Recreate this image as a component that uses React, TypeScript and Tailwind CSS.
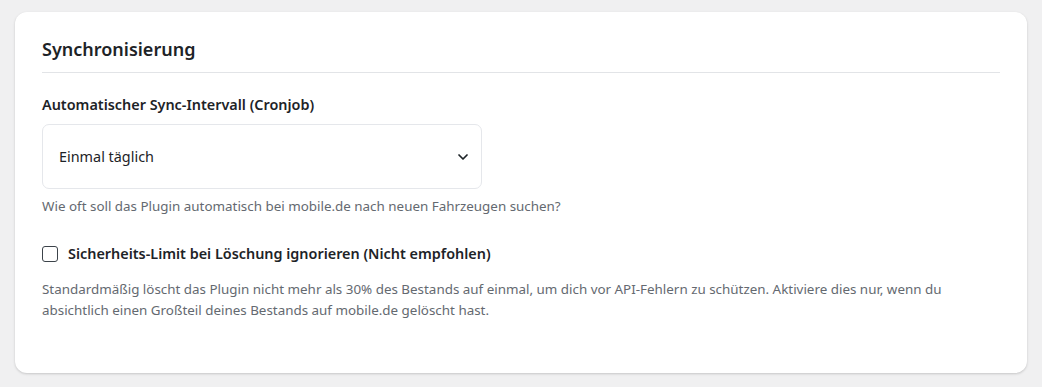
import { ChevronDown } from 'lucide-react';

export default function App() {
  return (
    <div className="min-h-screen bg-[#f0f0f1] px-[15px] pt-[12px] pb-[14px] text-[#1d2327] font-['Noto_Sans',_'Open_Sans',_sans-serif]">
      <div className="bg-white rounded-[12px] shadow-[0_1px_3px_rgba(0,0,0,0.12),0_1px_2px_rgba(0,0,0,0.06)] px-[27px] pt-[22px] pb-[52px]">
        {/* Überschrift */}
        <h2 className="text-[18px] font-semibold leading-[30px] pb-[8px] border-b border-[#e2e4e7]">Synchronisierung</h2>

        {/* Sync-Intervall */}
        <div className="mt-[22px]">
          <label className="block text-[14.4px] font-semibold leading-[20px]">Automatischer Sync-Intervall (Cronjob)</label>
          <div className="mt-[9px] w-[440px] h-[65px] border border-[#e5e7eb] rounded-[7px] flex items-center justify-between pl-[16px] pr-[10px]">
            <span className="text-[14.4px]">Einmal täglich</span>
            <ChevronDown size={16} strokeWidth={2.6} className="text-[#1d2327]" />
          </div>
          <p className="mt-[7px] text-[13.4px] text-[#646970] leading-[20px]">Wie oft soll das Plugin automatisch bei mobile.de nach neuen Fahrzeugen suchen?</p>
        </div>

        {/* Sicherheits-Limit */}
        <div className="mt-[28px]">
          <label className="flex items-center gap-[10px] text-[14.4px] font-semibold leading-[20px]">
            <span className="w-[16px] h-[16px] border-[1.5px] border-[#3c434a] rounded-[3px] bg-white shrink-0" />
            Sicherheits-Limit bei Löschung ignorieren (Nicht empfohlen)
          </label>
          <p className="mt-[15px] text-[13.4px] text-[#646970] leading-[21px]">
            Standardmäßig löscht das Plugin nicht mehr als 30% des Bestands auf einmal, um dich vor API-Fehlern zu schützen. Aktiviere dies nur, wenn du absichtlich einen Großteil deines Bestands auf mobile.de gelöscht hast.
          </p>
        </div>
      </div>
    </div>
  );
}
